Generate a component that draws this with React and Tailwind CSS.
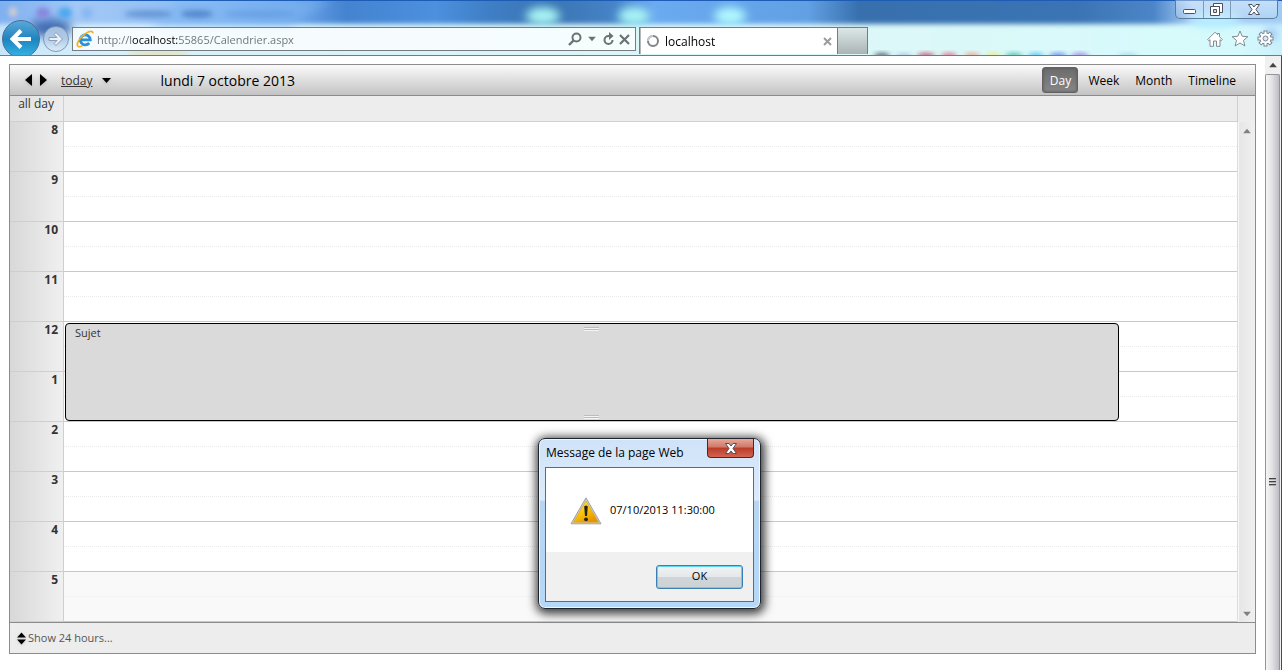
import React from "react";

const HOURS = ["8", "9", "10", "11", "12", "1", "2", "3", "4", "5"];

function Triangle({ dir, className }) {
  const points = {
    left: "8,0 8,12 1,6",
    right: "1,0 1,12 8,6",
    down: "0,1 9,1 4.5,6",
    up: "0,6 9,6 4.5,1",
  }[dir];
  const box = dir === "left" || dir === "right" ? "0 0 9 12" : "0 0 9 7";
  return (
    <svg viewBox={box} className={className} fill="currentColor" aria-hidden="true">
      <polygon points={points} />
    </svg>
  );
}

function GlassBackdrop() {
  return (
    <svg className="absolute inset-0 h-full w-full" preserveAspectRatio="none" viewBox="0 0 1282 55" aria-hidden="true">
      <defs>
        <linearGradient id="sky" x1="0" x2="1">
          <stop offset="0" stopColor="#7fb0f0" />
          <stop offset="0.06" stopColor="#a3c8f6" />
          <stop offset="0.16" stopColor="#8cbcf4" />
          <stop offset="0.23" stopColor="#6ea6ea" />
          <stop offset="0.27" stopColor="#4483d0" />
          <stop offset="0.34" stopColor="#4c90de" />
          <stop offset="0.38" stopColor="#3f7fc6" />
          <stop offset="0.43" stopColor="#3a74b2" />
          <stop offset="0.48" stopColor="#4684c8" />
          <stop offset="0.51" stopColor="#6aaaf0" />
          <stop offset="0.63" stopColor="#62a0e4" />
          <stop offset="0.67" stopColor="#3870ae" />
          <stop offset="0.84" stopColor="#3a74b4" />
          <stop offset="0.9" stopColor="#4c86c8" />
          <stop offset="0.93" stopColor="#a6ccf6" />
          <stop offset="1" stopColor="#a0ccf4" />
        </linearGradient>
        <linearGradient id="mist" x1="0" x2="1">
          <stop offset="0" stopColor="#c4e2f8" />
          <stop offset="0.1" stopColor="#d8f0fc" />
          <stop offset="0.5" stopColor="#daf6f8" />
          <stop offset="0.7" stopColor="#dcf8f8" />
          <stop offset="0.95" stopColor="#d6fafc" />
          <stop offset="1" stopColor="#c4ecfc" />
        </linearGradient>
        <filter id="b2" x="-50%" y="-50%" width="200%" height="200%"><feGaussianBlur stdDeviation="2.5" /></filter>
        <filter id="b4" x="-50%" y="-80%" width="200%" height="260%"><feGaussianBlur stdDeviation="5" /></filter>
      </defs>
      <rect width="1282" height="55" fill="url(#sky)" />
      <rect x="-20" y="24" width="1322" height="50" fill="url(#mist)" filter="url(#b2)" />
      <g filter="url(#b4)">
        <path d="M180 0 L330 0 L290 26 L150 26Z" fill="#7cb4f2" opacity=".6" />
        <ellipse cx="543" cy="16" rx="17" ry="9" fill="#a8f4f4" />
        <ellipse cx="634" cy="16" rx="16" ry="9" fill="#a8f4f4" />
        <ellipse cx="730" cy="16" rx="16" ry="9" fill="#b0f8ff" />
        <ellipse cx="1215" cy="20" rx="26" ry="8" fill="#b8f0ff" />
        <ellipse cx="50" cy="28" rx="22" ry="9" fill="#3c6cb4" />
        <ellipse cx="1271" cy="34" rx="5" ry="4" fill="#6c9cf0" />
      </g>
      <g filter="url(#b2)">
        <ellipse cx="13" cy="12" rx="4" ry="5" fill="#d4ccd0" />
        <ellipse cx="43" cy="13" rx="7" ry="6" fill="#8888dc" />
        <ellipse cx="65" cy="13" rx="7" ry="6" fill="#50a8ee" />
        <ellipse cx="87" cy="13" rx="6" ry="6" fill="#88b8f0" />
        <ellipse cx="148" cy="14" rx="24" ry="4" fill="#4c80c4" opacity=".6" />
        <ellipse cx="197" cy="14" rx="16" ry="4" fill="#4478c0" opacity=".7" />
        <ellipse cx="260" cy="14" rx="36" ry="4" fill="#5c94de" opacity=".5" />
        <ellipse cx="158" cy="54" rx="32" ry="2" fill="#e8dca0" />
      </g>
      <g filter="url(#b2)" opacity=".8">
        <ellipse cx="882" cy="56" rx="8" ry="3" fill="#303c50" />
        <ellipse cx="904" cy="56" rx="8" ry="2" fill="#88a8dc" />
        <ellipse cx="926" cy="56" rx="9" ry="3" fill="#b83060" />
        <ellipse cx="949" cy="56" rx="8" ry="3" fill="#e05070" />
        <ellipse cx="972" cy="56" rx="8" ry="3" fill="#f09070" />
        <ellipse cx="993" cy="56" rx="8" ry="3" fill="#ece870" />
        <ellipse cx="1014" cy="56" rx="9" ry="3" fill="#30b498" />
        <ellipse cx="1036" cy="56" rx="8" ry="3" fill="#30b8e8" />
        <ellipse cx="1058" cy="56" rx="9" ry="3" fill="#5070e0" />
        <ellipse cx="1080" cy="56" rx="9" ry="3" fill="#9070d8" />
        <ellipse cx="1128" cy="56" rx="10" ry="2" fill="#90c8e8" />
      </g>
      <rect width="1282" height="1" fill="#1c5cb4" />
    </svg>
  );
}

function IeLogo() {
  return (
    <svg viewBox="0 0 18 18" className="h-[18px] w-[18px] shrink-0" aria-hidden="true">
      <path d="M4 9.800h10.300A5 5 0 1 0 13.200 13" fill="none" stroke="#2a90d8" strokeWidth="2.800" />
      <path d="M4.400 8A5 5 0 0 1 9 4.900" fill="none" stroke="#7cd0f6" strokeWidth="1.400" />
      <path d="M2 16.400C-.4 14 4 7 9.500 3.600 13 1.200 17 .2 16.900 3.400" fill="none" stroke="#f2b01c" strokeWidth="1.700" />
      <path d="M2 16.400c1 .8 3 .2 4.600-.8" fill="none" stroke="#f2b01c" strokeWidth="1.500" />
    </svg>
  );
}

function WindowButtons() {
  const stroke = { fill: "#fff", stroke: "#4c5060", strokeWidth: 1 };
  return (
    <div className="mr-1 flex h-[19px] w-[103px] overflow-hidden rounded-b-[5px] border border-t-0 border-[#5c7c9c] bg-gradient-to-b from-white/40 to-white/15">
      <button type="button" aria-label="Minimize" className="flex w-7 items-center justify-center border-r border-[#7c9cbc]">
        <svg viewBox="0 0 13 5" className="mt-1 h-[5px] w-[13px]"><rect x=".5" y=".5" width="12" height="4" rx="1" {...stroke} /></svg>
      </button>
      <button type="button" aria-label="Restore" className="flex w-[27px] items-center justify-center border-r border-[#7c9cbc]">
        <svg viewBox="0 0 13 13" className="mr-0.5 h-[13px] w-[13px]">
          <path d="M3.500 .5h9v9h-3v-6h-6z" {...stroke} />
          <path fillRule="evenodd" d="M.5 3.500h9v9h-9z M3.500 6.500v3h3v-3z" {...stroke} />
        </svg>
      </button>
      <button type="button" aria-label="Close" className="flex flex-1 items-center justify-center">
        <CloseGlyph />
      </button>
    </div>
  );
}

function CloseGlyph() {
  return (
    <svg viewBox="0 0 12 11" className="h-[11px] w-3" aria-hidden="true">
      <path d="M.5 .5H4L6 3 8 .5h3.500L8 5.500l3.500 5H8L6 8l-2 2.500H.5L4 5.500z" fill="#fff" stroke="#4c5060" strokeLinejoin="round" />
    </svg>
  );
}

function BrowserChrome() {
  return (
    <header className="relative h-14 shrink-0 overflow-hidden border-b border-[#747b7b]">
      <GlassBackdrop />
      <div className="relative flex h-full">
        <nav className="flex w-[72px] shrink-0 items-start pt-5" aria-label="History">
          <button type="button" aria-label="Back" className="ml-0.5 h-[38px] w-[38px] shrink-0 rounded-full border border-[#4c6c94] bg-gradient-to-b from-[#58a8d8] via-[#1c84c0] to-[#38b4e4]">
            <svg viewBox="0 0 38 38" className="-ml-px -mt-px h-[38px] w-[38px]">
              <path d="M29 19H11M19 10.500 10.500 19l8.500 8.500" fill="none" stroke="#fff" strokeWidth="4" />
            </svg>
          </button>
          <button type="button" aria-label="Forward" className="ml-[3px] mt-1.5 h-[26px] w-[26px] shrink-0 rounded-full border border-[#8496b4] bg-gradient-to-b from-[#a4bede] via-[#b0cce8] to-[#dcecf8]">
            <svg viewBox="0 0 26 26" className="-ml-px -mt-px h-[26px] w-[26px]">
              <path d="M6 11.500h8L11 8.500 13 6.500l6.500 6.500-6.500 6.500-2-2 3-3H6z" fill="#e8f0fa" stroke="#8c9cb4" />
            </svg>
          </button>
        </nav>
        <div className="mt-[27px] flex h-6 min-w-0 flex-1 items-center border border-[#747e80] bg-white/75 pl-[3px]">
          <IeLogo />
          <input
            aria-label="Address"
            defaultValue="http://localhost:55865/Calendrier.aspx"
            className="ml-[3px] h-5 min-w-0 flex-1 bg-[linear-gradient(90deg,#6a7072_35px,#000_35px,#000_82px,#6a7072_82px)] bg-clip-text text-[11px] text-transparent outline-none"
          />
          <button type="button" aria-label="Search" className="text-[#6c7274]">
            <svg viewBox="0 0 14 14" className="h-3.5 w-3.5" fill="none" stroke="currentColor" strokeWidth="2">
              <circle cx="8.500" cy="5.500" r="4" /><path d="M5.500 8.500 1 13" strokeWidth="2.400" />
            </svg>
          </button>
          <button type="button" aria-label="Search options" className="ml-1.5 text-[#6c7274]"><Triangle dir="down" className="h-1.5 w-2" /></button>
          <button type="button" aria-label="Refresh" className="ml-1.5 text-[#6c7274]">
            <svg viewBox="0 0 13 14" className="h-3.5 w-[13px]" fill="none" stroke="currentColor" strokeWidth="2">
              <path d="M8 4H6.500a4 4 0 1 0 4 4" /><path d="M7 0v8l4.500-4z" fill="currentColor" stroke="none" />
            </svg>
          </button>
          <button type="button" aria-label="Stop" className="ml-1 mr-[5px] text-[#6c7274]">
            <svg viewBox="0 0 11 11" className="h-[11px] w-[11px]" fill="none" stroke="currentColor" strokeWidth="2.200"><path d="m1 1 9 9M10 1l-9 9" /></svg>
          </button>
        </div>
        <div className="ml-[3px] mt-[27px] flex h-[27px] w-[199px] shrink-0 items-center border border-b-0 border-[#747e80] bg-white pl-[7px] pr-[5px] shadow-[inset_1px_0_0_#b4b8b8]">
          <svg viewBox="0 0 12 12" className="h-3 w-3" fill="none" strokeWidth="2" aria-hidden="true">
            <circle cx="6" cy="6" r="5" stroke="#808486" /><path d="M1 6a5 5 0 0 1 5-5" stroke="#c8cccc" />
          </svg>
          <span className="ml-1.5 flex-1 pt-0.5 text-[12px] text-black">localhost</span>
          <button type="button" aria-label="Close tab" className="text-[#9c9c9c]">
            <svg viewBox="0 0 9 9" className="h-[9px] w-[9px]" fill="none" stroke="currentColor" strokeWidth="2"><path d="m1 1 7 7M8 1 1 8" /></svg>
          </button>
        </div>
        <button type="button" aria-label="New tab" className="mt-[27px] h-[27px] w-[30px] shrink-0 border border-b-0 border-l-0 border-[#747e80] bg-gradient-to-b from-[#dce8e8] to-[#aab4b4]" />
        <div className="flex w-[414px] shrink-0 flex-col items-end">
          <WindowButtons />
          <div className="mr-2 mt-[11px] flex items-center gap-2">
            <button type="button" aria-label="Home">
              <svg viewBox="0 0 16 16" className="h-4 w-4"><path d="m8 1.200 2.500 2.500V2.500h2v3.200L15.300 8.500l-1 1.200-1.300-1v6.600H9.500V10h-3v5.300H3V8.700l-1.300 1-1-1.200z" fill="#fff" stroke="#808c90" /></svg>
            </button>
            <button type="button" aria-label="Favorites">
              <svg viewBox="0 0 18 17" className="h-[17px] w-[18px]"><path d="m9 1 2.200 5.300 5.700.4-4.400 3.700 1.400 5.600L9 13l-4.900 3 1.400-5.600L1.100 6.700l5.700-.4z" fill="#fff" stroke="#808c90" /></svg>
            </button>
            <button type="button" aria-label="Tools">
              <svg viewBox="0 0 17 17" className="h-[17px] w-[17px]">
                <g stroke="#7c8890" strokeWidth="4"><path d="M8.500 .5v16M.5 8.500h16M2.800 2.800l11.400 11.400M14.200 2.800 2.800 14.200" /></g>
                <circle cx="8.500" cy="8.500" r="6" fill="#7c8890" />
                <g stroke="#fff" strokeWidth="2"><path d="M8.500 1.500v14M1.500 8.500h14M3.500 3.500l10 10M13.500 3.500l-10 10" /></g>
                <circle cx="8.500" cy="8.500" r="5" fill="#fff" />
                <circle cx="8.500" cy="8.500" r="2.500" fill="#d4e8f8" stroke="#7c8890" />
              </svg>
            </button>
          </div>
        </div>
      </div>
    </header>
  );
}

function Toolbar() {
  const link = "px-2 pt-0.5 text-black";
  return (
    <div className="flex h-[31px] items-center border-b border-[#8c8c8c] bg-gradient-to-b from-[#fbfbfb] to-[#c3c3c3] text-[12px]">
      <button type="button" aria-label="Previous day" className="ml-3.5"><Triangle dir="left" className="h-3 w-[9px] drop-shadow" /></button>
      <button type="button" aria-label="Next day" className="ml-1.5"><Triangle dir="right" className="h-3 w-[9px] drop-shadow" /></button>
      <a href="#today" className="ml-[13px] pt-0.5 text-[#333] underline">today</a>
      <button type="button" aria-label="Choose date" className="ml-[9px]"><Triangle dir="down" className="h-[7px] w-[9px] drop-shadow" /></button>
      <h1 className="ml-[50px] flex-1 text-[14px] text-black">lundi 7 octobre 2013</h1>
      <nav className="flex items-center pr-[11px]" aria-label="View">
        <a href="#day" className="mr-0.5 flex h-[26px] w-9 items-center justify-center rounded-[3px] border border-[#626262] bg-gradient-to-b from-[#6c6c6c] to-[#868686] pt-0.5 text-white shadow-[inset_0_0_3px_#555]">Day</a>
        <a href="#week" className={link}>Week</a>
        <a href="#month" className={link}>Month</a>
        <a href="#timeline" className={link}>Timeline</a>
      </nav>
    </div>
  );
}

function Grip() {
  return (
    <div className="mx-auto w-[15px]">
      <div className="h-px bg-[#bcbcbc]" /><div className="h-px bg-[#f4f4f4]" />
      <div className="h-px bg-[#bcbcbc]" /><div className="h-px bg-[#f4f4f4]" />
    </div>
  );
}

function Scheduler() {
  return (
    <section className="border border-[#8c8c8c] bg-[#ededed]" aria-label="Calendar">
      <Toolbar />
      <div className="flex h-[26px] text-[12px] text-[#333]">
        <div className="w-[54px] shrink-0 border-b border-r border-[#cfcfcf] bg-gradient-to-r from-[#e0e0e0] to-[#ededed] pr-[9px] text-right leading-4">all day</div>
        <div className="flex-1 border-b border-r border-[#cfcfcf]" />
        <div className="w-[17px] shrink-0" />
      </div>
      <div className="flex">
        <div className="relative min-w-0 flex-1 border-r border-[#dcdcdc] bg-white">
          <table className="w-full border-separate border-spacing-0">
            <tbody>
              {HOURS.map((h) => (
                <tr key={h}>
                  <th scope="row" className="h-[50px] w-[54px] border-b border-r border-[#cfcfcf] bg-gradient-to-r from-[#d8d8d8] to-[#f0f0f0] p-0 pr-[5px] text-right align-top text-[12px] font-bold leading-4 text-[#333]">{h}</th>
                  <td className={h === "5" ? "bg-[#f9f9f9] p-0" : "p-0"}>
                    <div className="h-[25px] border-b border-dotted border-[#ebebeb]" />
                    <div className="h-[25px] border-b border-[#c8c8cc]" />
                  </td>
                </tr>
              ))}
            </tbody>
          </table>
          <div className="absolute inset-y-0 left-[54px] right-0.5">
            <article className="absolute left-px top-[201px] flex h-[98px] w-[90%] flex-col justify-between rounded-[4px] border border-black bg-[#dadada] pb-px pt-[3px]">
              <Grip />
              <h2 className="absolute left-[9px] top-px text-[11px] leading-4 text-[#333]">Sujet</h2>
              <Grip />
            </article>
          </div>
        </div>
        <div className="flex w-[17px] shrink-0 flex-col items-center justify-between border-l border-[#f8f8f8] bg-gradient-to-r from-[#e6e6e6] to-[#f0f0f0] pb-[5px] pt-1.5 text-[#808080]" aria-hidden="true">
          <Triangle dir="up" className="h-1.5 w-2" />
          <Triangle dir="down" className="h-1.5 w-2" />
        </div>
      </div>
      <footer className="flex h-[31px] items-center border-t border-[#8c8c8c] pl-[7px] text-[11px] text-[#555]">
        <button type="button" className="flex items-center">
          <svg viewBox="0 0 9 13" className="mr-0.5 h-[13px] w-[9px] drop-shadow" aria-hidden="true">
            <path d="M0 5.500 4.500 .5 9 5.500zM0 7.500h9L4.500 12.500z" fill="#000" />
          </svg>
          Show 24 hours...
        </button>
      </footer>
    </section>
  );
}

function PageScrollbar() {
  return (
    <div className="flex w-[17px] shrink-0 flex-col border-r border-[#3c4c68] bg-[#f0f0f0]" aria-hidden="true">
      <div className="flex h-[18px] items-center justify-center text-[#444]"><Triangle dir="up" className="h-1.5 w-2" /></div>
      <div className="relative mr-px flex-1 rounded-t-[2px] border border-b-0 border-[#949498] bg-gradient-to-r from-[#f6f6f6] via-[#e0e0e2] to-[#bcbcc4]">
        <div className="absolute left-[3px] top-[403px] flex w-[7px] flex-col gap-px">
          <div className="h-0.5 border-t border-[#444] bg-[#aaa]" />
          <div className="h-0.5 border-t border-[#444] bg-[#aaa]" />
          <div className="h-0.5 border-t border-[#444] bg-[#aaa]" />
        </div>
      </div>
    </div>
  );
}

function MessageDialog() {
  return (
    <div role="alertdialog" aria-labelledby="msg-title" className="absolute left-[538px] top-[438px] w-[223px] rounded-[7px] border border-[#20242c] bg-[linear-gradient(#cfe3f8_0%,#dcebfa_36%,#b8d6f2_37%,#b4d8f6_100%)] px-1.5 pb-1.5 shadow-[inset_0_0_0_1px_#eef6ff,1px_2px_10px_3px_rgba(0,0,0,0.75)]">
      <div className="flex h-7 items-start justify-between">
        <h2 id="msg-title" className="pl-px pt-[5px] text-[12px] leading-[18px] text-black">Message de la page Web</h2>
        <button type="button" aria-label="Close" className="flex h-[19px] w-[47px] shrink-0 items-center justify-center rounded-b-[4px] border border-t-0 border-[#5c2020] bg-[linear-gradient(#e8a898_0%,#d07868_45%,#b83c28_50%,#d46450_100%)]">
          <CloseGlyph />
        </button>
      </div>
      <div className="border border-[#5c6c80] bg-[#f0f0f0]">
        <div className="flex h-[84px] items-center bg-white pl-6">
          <svg viewBox="0 0 32 28" className="mt-0.5 h-7 w-8" aria-hidden="true">
            <defs>
              <linearGradient id="warn" x1="0" y1="0" x2="0.6" y2="1">
                <stop offset="0" stopColor="#fff04c" /><stop offset=".5" stopColor="#fccc08" /><stop offset="1" stopColor="#e89400" />
              </linearGradient>
            </defs>
            <path d="M16 .8 31 26.800H1z" fill="#d0d0d0" stroke="#a0a0a0" strokeLinejoin="round" />
            <path d="M16 4 28.500 25.200H3.500z" fill="url(#warn)" stroke="#d8a010" strokeWidth=".6" />
            <path d="M14.200 9.500q1.800-1.800 3.600 0L17 19h-2z" fill="#222" />
            <circle cx="16" cy="22.300" r="1.900" fill="#222" />
          </svg>
          <p className="ml-2 text-[11px] text-black">07/10/2013 11:30:00</p>
        </div>
        <div className="flex h-[49px] items-center justify-end pr-2.5">
          <button type="button" className="h-6 w-[87px] rounded-[3px] border border-[#3c7fb1] bg-[linear-gradient(#f2f4f4_0%,#e4e8ea_48%,#d0d6d8_50%,#cdd2d4_100%)] text-[11px] text-black shadow-[inset_0_0_0_1px_#5cd4f4]">OK</button>
        </div>
      </div>
    </div>
  );
}

export default function App() {
  return (
    <div className="relative flex min-h-screen flex-col overflow-hidden bg-white font-['Segoe_UI','Open_Sans','Noto_Sans',sans-serif]">
      <BrowserChrome />
      <div className="flex flex-1">
        <main className="min-w-0 flex-1 pb-4 pl-[9px] pr-[9px] pt-2">
          <Scheduler />
        </main>
        <PageScrollbar />
      </div>
      <MessageDialog />
    </div>
  );
}
